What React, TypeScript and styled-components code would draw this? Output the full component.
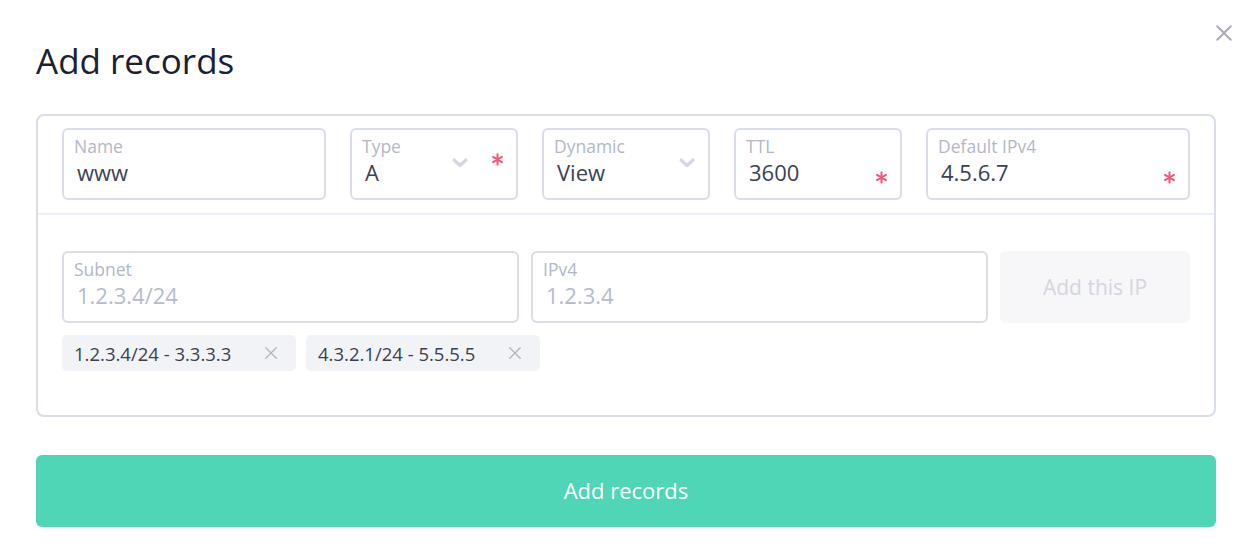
import styled, { createGlobalStyle } from 'styled-components';

const GlobalStyle = createGlobalStyle`
	html, body {
		margin: 0;
		padding: 0;
		background: #ffffff;
		font-family: 'Open Sans', 'Noto Sans', sans-serif;
	}
	* {
		box-sizing: border-box;
	}
`;

interface FieldProps {
	label: string;
	value: string;
	placeholder?: boolean;
	required?: boolean;
	select?: boolean;
}

const Chevron = () => (
	<svg width="18" height="12" viewBox="0 0 18 12">
		<path d="M3 3 L9 8.5 L15 3" fill="none" stroke="#d3d7e3" strokeWidth="3.2" strokeLinecap="round" strokeLinejoin="round" />
	</svg>
);

const Cross = ({ size, color }: { size: number; color: string }) => (
	<svg width={size} height={size} viewBox="0 0 16 16">
		<path d="M2 2 L14 14 M14 2 L2 14" fill="none" stroke={color} strokeWidth="1.6" strokeLinecap="round" />
	</svg>
);

// six-spoke required mark
const Asterisk = () => (
	<svg width="13" height="13" viewBox="0 0 14 14">
		<path
			d="M7 1.5 L7 12.5 M2.2 4.2 L11.8 9.8 M11.8 4.2 L2.2 9.8"
			fill="none"
			stroke="#f0577c"
			strokeWidth="2.2"
			strokeLinecap="round"
		/>
	</svg>
);

const Field = ({ label, value, placeholder, required, select }: FieldProps) => (
	<StyledField>
		<StyledLabel>{label}</StyledLabel>
		<StyledValue $placeholder={placeholder}>{value}</StyledValue>
		{select && (
			<StyledChevron $required={required}>
				<Chevron />
			</StyledChevron>
		)}
		{required && (
			<StyledAsterisk $top={select}>
				<Asterisk />
			</StyledAsterisk>
		)}
	</StyledField>
);

const chips = ['1.2.3.4/24 - 3.3.3.3', '4.3.2.1/24 - 5.5.5.5'];

const App = () => {
	return (
		<StyledPage>
			<GlobalStyle />
			<StyledClose aria-label="close">
				<Cross size={18} color="#a6aab8" />
			</StyledClose>
			<StyledTitle>Add records</StyledTitle>
			<StyledBox>
				<StyledTopRow>
					<Field label="Name" value="www" />
					<Field label="Type" value="A" select required />
					<Field label="Dynamic" value="View" select />
					<Field label="TTL" value="3600" required />
					<Field label="Default IPv4" value="4.5.6.7" required />
				</StyledTopRow>
				<StyledSubnets>
					<StyledSubnetRow>
						<Field label="Subnet" value="1.2.3.4/24" placeholder />
						<Field label="IPv4" value="1.2.3.4" placeholder />
						<StyledAddIp>Add this IP</StyledAddIp>
					</StyledSubnetRow>
					<StyledChips>
						{chips.map((chip) => (
							<StyledChip key={chip}>
								{chip}
								<Cross size={14} color="#b2b6c2" />
							</StyledChip>
						))}
					</StyledChips>
				</StyledSubnets>
			</StyledBox>
			<StyledSubmit>Add records</StyledSubmit>
		</StyledPage>
	);
};

export default App;

const StyledPage = styled.div`
	position: relative;
	width: 1252px;
	padding: 0 36px 22px;
`;
const StyledClose = styled.button`
	position: absolute;
	top: 24px;
	right: 19px;
	padding: 0;
	border: none;
	background: none;
	display: flex;
`;
const StyledTitle = styled.h1`
	margin: 0;
	height: 114px;
	padding-top: 37px;
	font-size: 35px;
	font-weight: 400;
	line-height: 48px;
	color: #1b2033;
`;
const StyledBox = styled.div`
	border: 2px solid #d9dde9;
	border-radius: 8px;
`;
const StyledTopRow = styled.div`
	display: grid;
	grid-template-columns: 264px 168px 168px 168px 264px;
	gap: 24px;
	padding: 12px 24px 13px;
	border-bottom: 2px solid #edf0fa;
`;
const StyledSubnets = styled.div`
	padding: 36px 24px 44px;
`;
const StyledSubnetRow = styled.div`
	display: grid;
	grid-template-columns: 1fr 1fr 190px;
	gap: 12px;
`;
const StyledField = styled.div`
	position: relative;
	height: 72px;
	border: 2px solid #d9dde9;
	border-radius: 6px;
	padding: 5px 10px 0 10px;
`;
const StyledLabel = styled.div`
	font-size: 17.5px;
	line-height: 22px;
	color: #b3b7c5;
`;
const StyledValue = styled.div<{ $placeholder?: boolean }>`
	font-size: 22px;
	line-height: 30px;
	padding-left: 3px;
	color: ${(p) => (p.$placeholder ? '#b7bbc8' : '#3c4154')};
`;
const StyledChevron = styled.span<{ $required?: boolean }>`
	position: absolute;
	top: 27px;
	right: ${(p) => (p.$required ? '47px' : '12px')};
	display: flex;
`;
const StyledAsterisk = styled.span<{ $top?: boolean }>`
	position: absolute;
	right: 12px;
	top: ${(p) => (p.$top ? '23px' : '41px')};
	display: flex;
`;
const StyledAddIp = styled.div`
	display: flex;
	align-items: center;
	justify-content: center;
	height: 72px;
	border-radius: 6px;
	background: #f7f7f9;
	font-size: 21px;
	color: #d2d6e1;
`;
const StyledChips = styled.div`
	display: flex;
	gap: 10px;
	margin-top: 12px;
`;
const StyledChip = styled.div`
	display: flex;
	align-items: center;
	justify-content: space-between;
	width: 234px;
	height: 36px;
	padding: 0 18px 0 12px;
	border-radius: 5px;
	background: #f2f3f6;
	font-size: 18.5px;
	color: #3a3f50;
`;
const StyledSubmit = styled.button`
	display: block;
	width: 100%;
	height: 72px;
	margin-top: 38px;
	padding: 0 0 3px;
	border: none;
	border-radius: 6px;
	background: #4fd6b7;
	font-family: inherit;
	font-size: 22px;
	color: #ffffff;
`;
